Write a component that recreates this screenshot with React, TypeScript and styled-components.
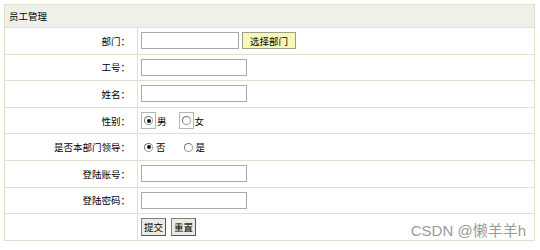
import styled, { createGlobalStyle } from "styled-components";

const GlobalStyle = createGlobalStyle`
  body {
    margin: 0;
    background: #ffffff;
    font-family: "Noto Sans CJK SC", "Liberation Sans", sans-serif;
    font-size: 9.5px;
    color: #000;
  }
`;

const Page = styled.div`
  position: relative;
  padding: 4px 5px 0 4px;
  width: 531px;
`;

const Table = styled.table`
  width: 531px;
  border-collapse: collapse;
  border: 1px solid #dde2cc;
`;

const HeadCell = styled.th`
  height: 22px;
  padding: 0 0 0 4px;
  text-align: left;
  font-weight: normal;
  background: #eef1ea;
  border: 1px solid #dde2cc;
  font-size: 9.5px;
`;

const Row = styled.tr`
  height: 26.6px;
`;

const Label = styled.td`
  width: 125px;
  padding: 0 7px 0 0;
  text-align: right;
  border: 1px solid #dde2cc;
  font-size: 9.5px;
`;

const Field = styled.td`
  padding: 0 0 0 3px;
  border: 1px solid #dde2cc;
  vertical-align: middle;
`;

const Line = styled.div<{ $gap?: number }>`
  display: flex;
  align-items: center;
  gap: ${(p) => p.$gap ?? 4}px;
`;

const TextInput = styled.input<{ $w?: number }>`
  box-sizing: border-box;
  width: ${(p) => p.$w ?? 106}px;
  height: 17px;
  margin: 0;
  padding: 0 2px;
  border: 1px solid #a9a9a9;
  font-size: 12px;
`;

const PickButton = styled.button`
  box-sizing: border-box;
  width: 54px;
  height: 17px;
  padding: 0;
  margin: 0;
  background: #f7f8b8;
  border: 1px solid #9aa08a;
  font-family: inherit;
  font-size: 9.5px;
  line-height: 14px;
  color: #000;
`;

const FormButton = styled.button`
  box-sizing: border-box;
  width: 25px;
  height: 18px;
  padding: 0;
  margin: 0;
  background: #ecebe2;
  border: 1px solid #808080;
  border-right-color: #555;
  border-bottom-color: #555;
  font-family: inherit;
  font-size: 9.5px;
  line-height: 14px;
  color: #000;
`;

const Choice = styled.label<{ $boxed?: boolean }>`
  display: inline-flex;
  align-items: center;
  gap: ${(p) => (p.$boxed ? "1px" : "3px")};
  margin-left: ${(p) => (p.$boxed ? "0" : "3px")};
  margin-right: ${(p) => (p.$boxed ? "12px" : "15px")};
  font-size: 9.5px;
`;

const RadioBox = styled.span<{ $boxed?: boolean }>`
  display: inline-flex;
  align-items: center;
  justify-content: center;
  width: ${(p) => (p.$boxed ? "15px" : "9px")};
  height: ${(p) => (p.$boxed ? "17px" : "9px")};
  border: ${(p) => (p.$boxed ? "1px solid #b5b5b5" : "none")};
  box-sizing: border-box;
`;

const Dot = styled.span<{ $on?: boolean }>`
  position: relative;
  display: block;
  box-sizing: border-box;
  width: 9px;
  height: 9px;
  border-radius: 50%;
  border: 1px solid #a0a0a0;
  border-top-color: #777;
  border-left-color: #777;
  background: #fff;
  &::after {
    content: "";
    display: ${(p) => (p.$on ? "block" : "none")};
    position: absolute;
    left: 1.5px;
    top: 1.5px;
    width: 4px;
    height: 4px;
    border-radius: 50%;
    background: #111;
  }
`;

const Watermark = styled.div`
  position: absolute;
  right: 14px;
  bottom: 1px;
  font-family: "Liberation Sans", "Noto Sans CJK SC", sans-serif;
  font-size: 15px;
  color: #9a9a9a;
`;

function Radio({ text, on, boxed }: { text: string; on?: boolean; boxed?: boolean }) {
  return (
    <Choice $boxed={boxed}>
      <RadioBox $boxed={boxed}>
        <Dot $on={on} />
      </RadioBox>
      {text}
    </Choice>
  );
}

const textRows = ["工号：", "姓名："];
const loginRows = ["登陆账号：", "登陆密码："];

export default function App() {
  return (
    <>
      <GlobalStyle />
      <Page>
        <Table>
          <thead>
            <tr>
              <HeadCell colSpan={2}>员工管理</HeadCell>
            </tr>
          </thead>
          <tbody>
            <Row>
              <Label>部门：</Label>
              <Field>
                <Line $gap={3}>
                  <TextInput $w={98} />
                  <PickButton>选择部门</PickButton>
                </Line>
              </Field>
            </Row>
            {textRows.map((t) => (
              <Row key={t}>
                <Label>{t}</Label>
                <Field>
                  <TextInput />
                </Field>
              </Row>
            ))}
            <Row>
              <Label>性别：</Label>
              <Field>
                <Line $gap={0}>
                  <Radio text="男" on boxed />
                  <Radio text="女" boxed />
                </Line>
              </Field>
            </Row>
            <Row>
              <Label>是否本部门领导：</Label>
              <Field>
                <Line $gap={0}>
                  <Radio text="否" on />
                  <Radio text="是" />
                </Line>
              </Field>
            </Row>
            {loginRows.map((t) => (
              <Row key={t}>
                <Label>{t}</Label>
                <Field>
                  <TextInput />
                </Field>
              </Row>
            ))}
            <Row>
              <Label />
              <Field>
                <Line $gap={5}>
                  <FormButton>提交</FormButton>
                  <FormButton>重置</FormButton>
                </Line>
              </Field>
            </Row>
          </tbody>
        </Table>
        <Watermark>CSDN @懒羊羊h</Watermark>
      </Page>
    </>
  );
}
